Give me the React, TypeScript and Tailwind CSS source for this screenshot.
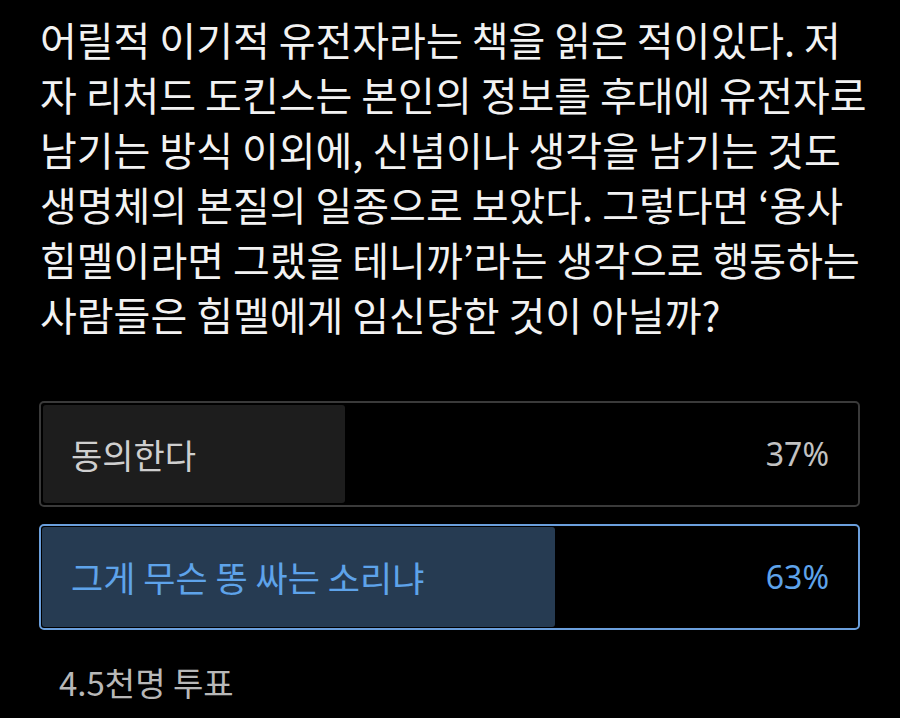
const lines = [
  '어릴적 이기적 유전자라는 책을 읽은 적이있다. 저',
  '자 리처드 도킨스는 본인의 정보를 후대에 유전자로',
  '남기는 방식 이외에, 신념이나 생각을 남기는 것도',
  '생명체의 본질의 일종으로 보았다. 그렇다면 ‘용사',
  '힘멜이라면 그랬을 테니까’라는 생각으로 행동하는',
  '사람들은 힘멜에게 임신당한 것이 아닐까?',
];

export default function App() {
  return (
    <div
      className="h-[718px] w-[900px] overflow-hidden bg-black"
      style={{ fontFamily: '"Noto Sans CJK KR", "Noto Sans", sans-serif' }}
    >
      <div className="px-[40px] pt-[12px] text-[40px] leading-[55px] text-[#f2f2f2]">
        {lines.map((l) => (
          <div key={l} className="whitespace-nowrap">
            {l}
          </div>
        ))}
      </div>

      <div className="mt-[59px] flex flex-col gap-[17px] pl-[39px] pr-[40px]">
        <div className="relative h-[106px] rounded-[5px] border-2 border-[#3a3a3a] p-[2px]">
          <div className="h-full w-[302px] rounded-[3px] bg-[#1d1d1d]" />
          <div className="absolute inset-0 flex items-center justify-between pl-[30px] pr-[29px]">
            <span className="text-[34px] text-[#cfcfcf]">동의한다</span>
            <span className="text-[32px] text-[#c2c2c2]" style={{ fontFamily: '"Noto Sans", sans-serif' }}>
              37%
            </span>
          </div>
        </div>

        <div className="relative h-[106px] rounded-[5px] border-2 border-[#6b9fdc] p-[1px]">
          <div className="h-full w-[513px] rounded-[3px] bg-[#263b52]" />
          <div className="absolute inset-0 flex items-center justify-between pl-[30px] pr-[29px]">
            <span className="text-[35px] text-[#5ea3ea]">그게 무슨 똥 싸는 소리냐</span>
            <span className="text-[32px] text-[#5ea3ea]" style={{ fontFamily: '"Noto Sans", sans-serif' }}>
              63%
            </span>
          </div>
        </div>
      </div>

      <div className="mt-[28px] pl-[59px] text-[33px] text-[#b8b8b8]">4.5천명 투표</div>
    </div>
  );
}
